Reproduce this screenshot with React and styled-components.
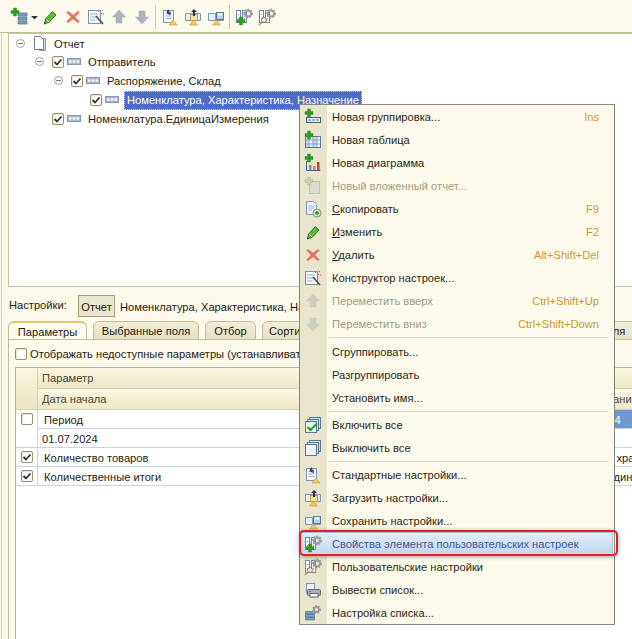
import React from 'react'
import styled, { createGlobalStyle } from 'styled-components'

const GlobalStyle = createGlobalStyle`
  html, body {
    margin: 0;
    padding: 0;
    background: #fcfaed;
  }
  body {
    font-family: 'Liberation Sans', Arial, sans-serif;
    font-size: 11.15px;
    color: #1f1d10;
  }
`

const Page = styled('div')`
  position: relative;
  width: 632px;
  height: 639px;
  overflow: hidden;
  display: flex;
  flex-direction: column;
  background: #fcfaed;
`

const Toolbar = styled('div')`
  flex: 0 0 33px;
  box-sizing: border-box;
  display: flex;
  align-items: center;
  padding: 2px 0 0 8px;
  border-bottom: 1px solid #c4bd99;
`

const ToolButton = styled('div')`
  flex: 0 0 23px;
  display: flex;
  justify-content: center;
`

const DropArrow = styled('div')`
  flex: 0 0 7px;
  box-sizing: border-box;
  height: 3px;
  margin-top: 1px;
  border-left: 3px solid transparent;
  border-right: 3px solid transparent;
  border-top: 3px solid #333;
`

const ToolSeparator = styled('div')`
  flex: 0 0 1px;
  height: 24px;
  margin: 0 2px;
  background: #cfc9aa;
`

const Main = styled('div')`
  flex: 1;
  width: 680px;
  min-height: 0;
  margin-left: 1px;
  padding-left: 6px;
  border-left: 1px solid #d6d0ab;
  display: flex;
  flex-direction: column;
`

const Tree = styled('div')`
  flex: 0 0 254px;
  box-sizing: border-box;
  padding-top: 1px;
  background: #fff;
  border: 1px solid #c9c3a2;
`

const TreeRow = styled('div')`
  height: 19px;
  display: flex;
  align-items: center;
  padding-left: ${p => p.$indent}px;
  &:first-child {
    height: 17px;
  }
`

const Expander = styled('span')`
  position: relative;
  flex: 0 0 9px;
  height: 9px;
  box-sizing: border-box;
  margin-right: 8px;
  border: 1px solid #a3a3a3;
  border-radius: 50%;
  &::after {
    content: '';
    position: absolute;
    left: 1px;
    top: 3px;
    width: 5px;
    height: 1px;
    background: #777;
  }
`

const TreeIcon = styled('span')`
  flex: 0 0 21px;
  display: flex;
  align-items: center;
`

const TreeLabel = styled('span')`
  white-space: nowrap;
  line-height: 17px;
  padding-top: 2px;
  ${p =>
    p.$selected &&
    `
    margin: 2px 0 0 -2px;
    padding: 1px 3px;
    background: #4f6bc8;
    color: #fff;
    outline: 1px dotted #c8d2f0;
    outline-offset: -1px;
  `}
`

const Box = styled('span')`
  flex: 0 0 12px;
  width: 12px;
  height: 12px;
  box-sizing: border-box;
  margin-right: ${p => p.$gap || 0}px;
  display: flex;
  align-items: center;
  justify-content: center;
  background: #fff;
  border: 1px solid #9b9068;
  border-radius: 2px;
  box-shadow: inset 1px 1px 1px #e8e4d0;
`

const SettingsRow = styled('div')`
  flex: 0 0 34px;
  display: flex;
  align-items: center;
  padding: 4px 0 0 1px;
  box-sizing: border-box;
`

const SettingsLabel = styled('span')`
  flex: 0 0 69px;
  margin-top: -3px;
`

const SettingsButton = styled('span')`
  box-sizing: border-box;
  width: 37px;
  height: 22px;
  display: flex;
  align-items: center;
  justify-content: center;
  padding-top: 2px;
  background: #ebe6cf;
  border: 1px solid #a89f76;
`

const SettingsPath = styled('span')`
  margin-left: 5px;
  padding-top: 2px;
  white-space: nowrap;
`

const Tabs = styled('div')`
  flex: 0 0 19px;
  display: flex;
  gap: 6px;
  overflow: hidden;
`

const Tab = styled('div')`
  box-sizing: border-box;
  flex: 0 0 ${p => p.$width}px;
  height: 19px;
  display: flex;
  align-items: center;
  justify-content: center;
  white-space: nowrap;
  border: 1px solid #c4bd99;
  border-radius: 6px 6px 0 0;
  background: ${p =>
    p.$active ? '#fcfaed' : 'linear-gradient(#f2eeda, #e6e0c4)'};
  ${p =>
    p.$active &&
    `
    border-bottom: none;
    border-top: 2px solid #e8c468;
    padding-top: 1px;
  `}
`

const Panel = styled('div')`
  flex: 1;
  min-height: 0;
  margin-top: -1px;
  padding-left: 6px;
  border-left: 1px solid #c4bd99;
  border-top: 1px solid #c4bd99;
  display: flex;
  flex-direction: column;
`

const ShowRow = styled('label')`
  flex: 0 0 27px;
  display: flex;
  align-items: center;
  white-space: nowrap;
`

const Table = styled('div')`
  flex: 1;
  display: grid;
  grid-template-columns: 22px 511px 1fr;
  grid-template-rows: 21px 21px 19px 19px 19px 19px 1fr;
  background: #fff;
  border-left: 1px solid #b8b294;
  border-top: 1px solid #b8b294;
`

const HeaderCorner = styled('div')`
  grid-row: span 2;
  background: linear-gradient(#fbf7e2, #ece5c4);
  border-right: 1px solid #d6d0ab;
  border-bottom: 1px solid #d6d0ab;
`

const HeaderCell = styled('div')`
  display: flex;
  align-items: center;
  padding-left: ${p => p.$pad || 4}px;
  white-space: nowrap;
  color: #4a4630;
  background: linear-gradient(#fbf7e2, #efe8c8);
  border-bottom: 1px solid #d6d0ab;
`

const MarkCell = styled('div')`
  grid-row: span ${p => p.$span || 1};
  display: flex;
  justify-content: center;
  padding-top: 3px;
  border-right: 1px solid #c8d5e3;
  border-bottom: 1px solid #c8d5e3;
`

const Cell = styled('div')`
  display: flex;
  align-items: center;
  overflow: hidden;
  white-space: nowrap;
  padding-top: 1px;
  padding-left: ${p => p.$pad || 6}px;
  border-bottom: 1px solid #c8d5e3;
  ${p => p.$selected && 'background: #6f9ad0; color: #fff;'}
`

const Menu = styled('div')`
  position: absolute;
  left: 299px;
  top: 104px;
  width: 316px;
  box-sizing: border-box;
  background: linear-gradient(to right, #e9e5cd 27px, #fcfaed 27px);
  border: 1px solid #87867c;
`

const MenuRow = styled('div')`
  position: relative;
  height: 23px;
  display: flex;
  align-items: center;
  padding-right: 15px;
  color: ${p => (p.$disabled ? '#a39d85' : '#2c2914')};
  ${p =>
    p.$marked &&
    `
    color: #3d5a94;
    margin-right: 1px;
    background: linear-gradient(#e4eefa, #bfd5f0);
    box-shadow: inset 0 0 0 1px #a9bdd6;
    &::after {
      content: '';
      position: absolute;
      left: -1px;
      right: -5px;
      top: -2px;
      bottom: -1px;
      border: 2px solid #ee1c20;
      border-radius: 5px;
      box-shadow: 0 1px 4px rgba(0, 0, 0, 0.35);
    }
  `}
`

const MenuIcon = styled('span')`
  flex: 0 0 26px;
  display: flex;
  justify-content: center;
  opacity: ${p => (p.$disabled ? 0.45 : 1)};
`

const MenuLabel = styled('span')`
  flex: 1;
  margin-left: 6px;
  padding-top: 1px;
  white-space: nowrap;
`

const Mnemonic = styled('span')`
  text-decoration: underline;
`

const Shortcut = styled('span')`
  padding-top: 1px;
  color: #c99a2e;
`

const MenuSeparator = styled('div')`
  height: ${p => p.$height}px;
  display: flex;
  align-items: center;
  padding: 0 6px 0 29px;
  &::after {
    content: '';
    flex: 1;
    height: 1px;
    background: #d9d5c0;
  }
`

const IconSvg = styled('svg')`
  display: block;
  overflow: visible;
`

const Plus = ({ x = 0, y = 0, fill = '#2f9e1e' }) => (
  <path
    d={`M${x + 2.5} ${y}h3v2.5h2.5v3h-2.5v2.5h-3v-2.5h-2.5v-3h2.5z`}
    fill={fill}
    stroke="#2a8019"
    strokeWidth=".4"
  />
)

const Gear = ({ x, y, r = 3 }) => (
  <g>
    <circle cx={x} cy={y} r={r} fill="none" stroke="#9c9c9c" strokeWidth="2" />
    <circle
      cx={x}
      cy={y}
      r={r + 1.3}
      fill="none"
      stroke="#9c9c9c"
      strokeWidth="1.4"
      strokeDasharray="1.6 1.6"
    />
  </g>
)

const Warn = ({ x = 8, y = 11 }) => (
  <path
    d={`M${x} ${y}l4 5h-8z`}
    fill="#f0c860"
    stroke="#c39a30"
    strokeWidth=".6"
  />
)

const Sheet = ({ x = 2, y = 1, w = 10, h = 12, fill = '#f4f8fc' }) => (
  <g>
    <rect x={x} y={y} width={w} height={h} fill={fill} stroke="#7f98b4" />
    <path
      d={`M${x + 2} ${y + 3}h${w - 4}M${x + 2} ${y + 5.5}h${w - 4}M${x + 2} ${y + 8}h${w - 4}`}
      stroke="#9db2c8"
    />
  </g>
)

const CellColumns = ({ x = 0, y = 2, color = '#6f88a8' }) => (
  <g fill="#fff" stroke={color}>
    <rect x={x + 0.5} y={y + 0.5} width="4" height="12" />
    <rect x={x + 6.5} y={y + 0.5} width="4" height="12" />
    <path d={`M${x} ${y + 4.5}h11M${x} ${y + 8.5}h11`} strokeDasharray="1 1" />
  </g>
)

const Arrow = ({ down }) => (
  <path
    d={
      down
        ? 'M5 2h6v6h3.500l-6.500 7-6.500-7h3.500z'
        : 'M8 1l6.500 7h-3.500v6h-6v-6h-3.500z'
    }
    fill="#a9b4bf"
    stroke="#9aa5b0"
    strokeWidth=".5"
  />
)

const Book = () => (
  <g>
    <path d="M.5 4.500h7v7h-7z" fill="#e6eff8" stroke="#7f98b4" />
    <path d="M8.500 4.500h7v7h-7z" fill="#e6eff8" stroke="#7f98b4" />
  </g>
)

const icons = {
  group: (
    <g>
      <rect x=".5" y="4.500" width="13" height="6" fill="#aebccd" stroke="#8796aa" />
      <path d="M2 6.500h2.500v2h-2.500zM5.800 6.500h2.500v2h-2.500zM9.500 6.500h2.500v2h-2.500z" fill="#fff" />
    </g>
  ),
  doc: (
    <g>
      <path d="M3.500 3.500h6v12h-6z" fill="#dfe4ea" stroke="#8e99a6" transform="translate(3 -1)" />
      <path d="M1.500.5h6l3 3v10h-9z" fill="#fff" stroke="#6f7f92" />
    </g>
  ),
  addGroup: (
    <g>
      <path d="M6 4h9v3h-9zM6 8h9v3h-9zM6 12h9v3h-9z" fill="#7fa1c4" stroke="#3d6288" strokeWidth=".6" />
      <Plus x={-1} y={-1} />
    </g>
  ),
  addRows: (
    <g>
      <rect x="1.500" y="8.500" width="14" height="5" fill="#dbe4ee" stroke="#4b6583" />
      <path d="M3.500 10.500h2v1h-2zM7.500 10.500h2v1h-2zM11.500 10.500h2v1h-2z" fill="#4b6583" />
      <Plus x={0} y={0} />
    </g>
  ),
  addTable: (
    <g>
      <rect x=".5" y="4.500" width="15" height="11" fill="#fff" stroke="#5c7898" />
      <path d="M1 5h3v10h-3zM8 5h4v10h-4z" fill="#a9c0d8" opacity=".6" />
      <path d="M4 5v10M8 5v10M12 5v10M1 8h14M1 12h14" stroke="#7f9fc0" />
      <Plus x={0} y={-1} />
    </g>
  ),
  addChart: (
    <g>
      <path d="M1.500 6v9.500h14" fill="none" stroke="#4b6583" />
      <path d="M4 10h2.500v5h-2.500z" fill="#6f93b8" />
      <path d="M8 11h2.500v4h-2.500z" fill="#d98a2e" />
      <path d="M12 7h2.500v8h-2.500z" fill="#c8442e" />
      <Plus x={0} y={-1} />
    </g>
  ),
  addNested: (
    <g>
      <rect x="4.500" y="3.500" width="10" height="12" fill="#c8cfd8" stroke="#8e99a6" />
      <Plus x={0} y={-1} fill="#a9b0a9" />
    </g>
  ),
  copy: (
    <g>
      <path d="M1.500.5h7l3 3v10h-10z" fill="#f4f8fc" stroke="#7f98b4" />
      <path d="M3 5h6M3 7h6M3 9h4" stroke="#9db2c8" />
      <circle cx="12" cy="12" r="4" fill="#cfe6cc" stroke="#7f9a7d" />
      <path d="M10 12h4M12 10v4" stroke="#2f9e1e" strokeWidth="1.500" />
    </g>
  ),
  pencil: (
    <g>
      <path d="M10.500 2.500l3.500 3.500-7 7.500-4.500 1 1-4.500z" fill="#63b83a" stroke="#2f7a1c" />
      <path d="M4.500 10.500l2.500 2.500" stroke="#d8efc4" />
      <path d="M2.500 13.500l-.5 2 2-.5z" fill="#234" />
    </g>
  ),
  cross: (
    <path
      d="M3 2l5 4 5-4 1.500 1.500-4.500 4.500 4.500 4.500-1.500 1.500-5-4-5 4-1.500-1.500 4.500-4.500-4.500-4.500z"
      fill="#e8705c"
      stroke="#e39a8a"
      strokeWidth=".5"
    />
  ),
  wand: (
    <g>
      <rect x=".5" y="1.500" width="12" height="13" fill="#f4f8fc" stroke="#7b93ad" />
      <path d="M2 5h8M2 8h6M2 11h5" stroke="#9db2c8" />
      <path d="M8 7l7 8" stroke="#555" strokeWidth="1.800" />
      <path d="M10 2l1 1M14 2l1-1M15 5l1 0M13 4l1 1" stroke="#d8433a" />
    </g>
  ),
  up: <Arrow />,
  down: <Arrow down />,
  standard: (
    <g>
      <Sheet x={1.500} y={1.500} w={10} h={12} />
      <path d="M8 6v-3h-3M5 3l2-2M5 3l2 2" fill="none" stroke="#1f3550" strokeWidth="1.200" />
      <Warn x={11} y={11} />
    </g>
  ),
  load: (
    <g>
      <Book />
      <rect x="5.500" y="5.500" width="7" height="6" fill="#f6e4a6" stroke="#c39a30" />
      <path d="M9 0l3 3h-2v4h-2v-4h-2z" fill="#1f3550" />
      <Warn x={8.500} y={11} />
    </g>
  ),
  save: (
    <g>
      <Book />
      <rect x="8.500" y="3.500" width="7" height="7" fill="#b9d2e8" stroke="#5c7898" />
      <rect x="10" y="4" width="4" height="2.500" fill="#fff" />
      <Warn x={8.500} y={11} />
    </g>
  ),
  propsAdd: (
    <g>
      <CellColumns x={0} y={1} />
      <Gear x={12} y={4.500} />
      <Plus x={1} y={8} />
    </g>
  ),
  propsFind: (
    <g>
      <CellColumns x={0} y={1} />
      <Gear x={12} y={4.500} />
      <circle cx="5" cy="11" r="2.500" fill="#e8eef4" stroke="#8a7a5a" />
      <path d="M3 13l-3 3" stroke="#b98a3c" strokeWidth="1.500" />
    </g>
  ),
  checkAll: (
    <g>
      <rect x="4.500" y=".5" width="11" height="11" fill="#cfe0f0" stroke="#5c7898" />
      <rect x="2.500" y="2.500" width="11" height="11" fill="#cfe0f0" stroke="#5c7898" />
      <rect x=".5" y="4.500" width="11" height="11" fill="#e8f0f8" stroke="#5c7898" />
      <path d="M2.500 10l3 3 6-6" fill="none" stroke="#2f9e1e" strokeWidth="2.200" />
    </g>
  ),
  uncheckAll: (
    <g>
      <rect x="4.500" y=".5" width="11" height="11" fill="#cfe0f0" stroke="#5c7898" />
      <rect x="2.500" y="2.500" width="11" height="11" fill="#cfe0f0" stroke="#5c7898" />
      <rect x=".5" y="4.500" width="11" height="11" fill="#eef4fa" stroke="#5c7898" />
    </g>
  ),
  print: (
    <g>
      <rect x="1.500" y="1.500" width="8" height="10" fill="#eef4fa" stroke="#7f98b4" />
      <rect x="2.500" y="7.500" width="13" height="6" rx="1" fill="#aab2ba" stroke="#666" />
      <rect x="5" y="11.500" width="8" height="3.500" fill="#fff" stroke="#666" />
      <path d="M4 9.500h2" stroke="#d8433a" />
    </g>
  ),
  list: (
    <g>
      <path d="M.5 6.500h9v2.500h-9zM.5 9.500h9v2.500h-9zM.5 12.500h9v2.500h-9z" fill="#7fa1c4" stroke="#3d6288" strokeWidth=".6" />
      <Gear x={11.500} y={4.500} r={2.500} />
    </g>
  ),
}

const Icon = ({ name }) => (
  <IconSvg width="16" height="16" viewBox="0 0 16 16">
    {icons[name]}
  </IconSvg>
)

const CheckMark = () => (
  <IconSvg width="10" height="10" viewBox="0 0 10 10">
    <path d="M1.500 5l2.500 2.500 4.500-5" fill="none" stroke="#333" strokeWidth="1.800" />
  </IconSvg>
)

const Check = ({ on, gap }) => <Box $gap={gap}>{on && <CheckMark />}</Box>

const toolbarIcons = [
  ['pencil', 'cross', 'wand', 'up', 'down'],
  ['standard', 'load', 'save'],
  ['propsAdd', 'propsFind'],
]

const tabs = [
  ['Выбранные поля', 106],
  ['Отбор', 51],
  ['Сортировка', 75],
  ['Условное оформление', 130],
  ['Пользовательские поля', 170],
]

const menu = [
  { label: 'Новая группировка...', icon: 'addRows', keys: 'Ins' },
  { label: 'Новая таблица', icon: 'addTable' },
  { label: 'Новая диаграмма', icon: 'addChart' },
  { label: 'Новый вложенный отчет...', icon: 'addNested', disabled: true },
  { label: 'копировать', mn: 'С', icon: 'copy', keys: 'F9' },
  { label: 'зменить', mn: 'И', icon: 'pencil', keys: 'F2' },
  { label: 'далить', mn: 'У', icon: 'cross', keys: 'Alt+Shift+Del' },
  { label: 'Конструктор настроек...', icon: 'wand' },
  { label: 'Переместить вверх', icon: 'up', keys: 'Ctrl+Shift+Up', disabled: true },
  { label: 'Переместить вниз', icon: 'down', keys: 'Ctrl+Shift+Down', disabled: true },
  { separator: 5 },
  { label: 'Сгруппировать...' },
  { label: 'Разгруппировать' },
  { label: 'Установить имя...' },
  { separator: 4 },
  { label: 'Включить все', icon: 'checkAll' },
  { label: 'Выключить все', icon: 'uncheckAll' },
  { separator: 4 },
  { label: 'Стандартные настройки...', icon: 'standard' },
  { label: 'Загрузить настройки...', icon: 'load' },
  { label: 'Сохранить настройки...', icon: 'save' },
  { label: 'Свойства элемента пользовательских настроек', icon: 'propsAdd', marked: true },
  { label: 'Пользовательские настройки', icon: 'propsFind' },
  { label: 'Вывести список...', icon: 'print' },
  { label: 'Настройка списка...', icon: 'list' },
]

export default function App() {
  return (
    <Page>
      <GlobalStyle />
      <Toolbar>
        <ToolButton>
          <Icon name="addGroup" />
        </ToolButton>
        <DropArrow />
        {toolbarIcons.map((group, i) => (
          <React.Fragment key={i}>
            {i > 0 && <ToolSeparator />}
            {group.map(name => (
              <ToolButton key={name}>
                <Icon name={name} />
              </ToolButton>
            ))}
          </React.Fragment>
        ))}
      </Toolbar>

      <Main>
        <Tree>
          <TreeRow $indent={7}>
            <Expander />
            <TreeIcon>
              <Icon name="doc" />
            </TreeIcon>
            <TreeLabel>Отчет</TreeLabel>
          </TreeRow>
          <TreeRow $indent={26}>
            <Expander />
            <Check on gap={3} />
            <TreeIcon>
              <Icon name="group" />
            </TreeIcon>
            <TreeLabel>Отправитель</TreeLabel>
          </TreeRow>
          <TreeRow $indent={45}>
            <Expander />
            <Check on gap={3} />
            <TreeIcon>
              <Icon name="group" />
            </TreeIcon>
            <TreeLabel>Распоряжение, Склад</TreeLabel>
          </TreeRow>
          <TreeRow $indent={81}>
            <Check on gap={3} />
            <TreeIcon>
              <Icon name="group" />
            </TreeIcon>
            <TreeLabel $selected>Номенклатура, Характеристика, Назначение</TreeLabel>
          </TreeRow>
          <TreeRow $indent={43}>
            <Check on gap={3} />
            <TreeIcon>
              <Icon name="group" />
            </TreeIcon>
            <TreeLabel>Номенклатура.ЕдиницаИзмерения</TreeLabel>
          </TreeRow>
        </Tree>

        <SettingsRow>
          <SettingsLabel>Настройки:</SettingsLabel>
          <SettingsButton>Отчет</SettingsButton>
          <SettingsPath>Номенклатура, Характеристика, Назначение</SettingsPath>
        </SettingsRow>

        <Tabs>
          <Tab $active $width={79}>Параметры</Tab>
          {tabs.map(([label, width]) => (
            <Tab key={label} $width={width}>{label}</Tab>
          ))}
        </Tabs>

        <Panel>
          <ShowRow>
            <Check gap={3} />
            Отображать недоступные параметры (устанавливать значения)
          </ShowRow>
          <Table>
            <HeaderCorner />
            <HeaderCell>Параметр</HeaderCell>
            <HeaderCell />
            <HeaderCell>Дата начала</HeaderCell>
            <HeaderCell $pad={7}>Дата окончания</HeaderCell>

            <MarkCell $span={2}>
              <Check />
            </MarkCell>
            <Cell>Период</Cell>
            <Cell $selected $pad={16}>31.07.2024</Cell>
            <Cell $pad={4}>01.07.2024</Cell>
            <Cell />

            <MarkCell>
              <Check on />
            </MarkCell>
            <Cell>Количество товаров</Cell>
            <Cell $pad={32}>Место хранения</Cell>

            <MarkCell>
              <Check on />
            </MarkCell>
            <Cell>Количественные итоги</Cell>
            <Cell $pad={57}>Единицы</Cell>
          </Table>
        </Panel>
      </Main>

      <Menu>
        {menu.map((item, i) =>
          item.separator ? (
            <MenuSeparator key={i} $height={item.separator} />
          ) : (
            <MenuRow key={i} $disabled={item.disabled} $marked={item.marked}>
              <MenuIcon $disabled={item.disabled}>
                {item.icon && <Icon name={item.icon} />}
              </MenuIcon>
              <MenuLabel>
                {item.mn && <Mnemonic>{item.mn}</Mnemonic>}
                {item.label}
              </MenuLabel>
              {item.keys && <Shortcut>{item.keys}</Shortcut>}
            </MenuRow>
          )
        )}
      </Menu>
    </Page>
  )
}
